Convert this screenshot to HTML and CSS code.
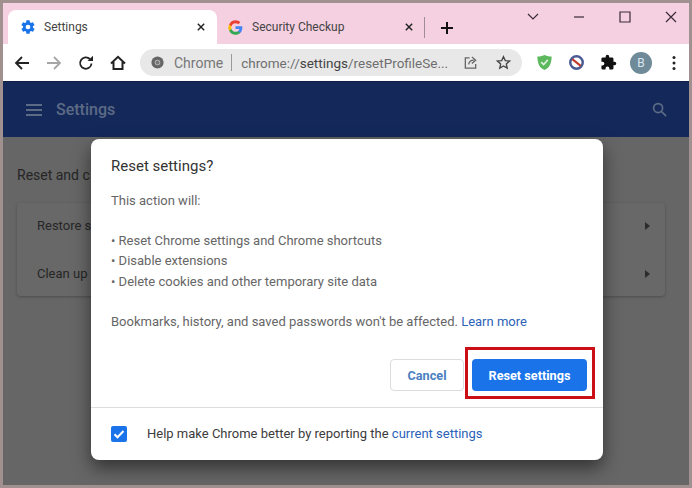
FILE: index.html
```html
<!DOCTYPE html>
<html lang="en">
<head>
<meta charset="utf-8">
<title>Settings</title>
<link rel="stylesheet" href="styles.css">
</head>
<body>
<div class="window">
  <div class="tabstrip">
    <div class="tab active">
      <svg class="favicon" viewBox="0 0 24 24"><path fill="#1a73e8" d="M19.4 13c.04-.32.07-.66.07-1s-.03-.68-.07-1l2.1-1.65c.2-.15.25-.42.12-.64l-2-3.46c-.12-.22-.38-.3-.6-.22l-2.5 1c-.52-.4-1.08-.73-1.7-.98l-.37-2.65A.5.5 0 0 0 14 2h-4a.5.5 0 0 0-.5.42l-.37 2.65c-.62.25-1.18.59-1.7.98l-2.5-1c-.22-.08-.48 0-.6.22l-2 3.46c-.13.22-.07.49.12.64L4.57 11c-.04.32-.07.66-.07 1s.03.68.07 1l-2.1 1.65c-.2.15-.25.42-.12.64l2 3.46c.12.22.38.3.6.22l2.5-1c.52.4 1.08.73 1.7.98l.37 2.65c.05.24.25.42.5.42h4c.25 0 .45-.18.5-.42l.37-2.65c.62-.25 1.18-.59 1.7-.98l2.5 1c.22.08.48 0 .6-.22l2-3.46c.13-.22.07-.49-.12-.64L19.4 13zM12 15.5a3.5 3.5 0 1 1 0-7 3.5 3.5 0 0 1 0 7z"/></svg>
      <span class="tab-title">Settings</span>
      <svg class="tab-close" viewBox="0 0 10 10"><path d="M1 1l8 8M9 1l-8 8"/></svg>
    </div>
    <div class="tab">
      <svg class="favicon" viewBox="0 0 24 24"><path fill="#4285f4" d="M23 12.3c0-.8-.1-1.600-.2-2.300H12v4.400h6.200c-.3 1.400-1.100 2.600-2.300 3.400v2.800h3.700c2.100-2 3.400-4.900 3.400-8.300z"/><path fill="#34a853" d="M12 23.500c3.100 0 5.700-1 7.600-2.800l-3.700-2.900c-1 .7-2.300 1.100-3.900 1.100-3 0-5.500-2-6.400-4.700H1.800V17c1.900 3.900 5.800 6.500 10.200 6.500z"/><path fill="#fbbc05" d="M5.600 14.200c-.2-.7-.4-1.400-.4-2.200s.1-1.500.4-2.200V7H1.800C1 8.500.5 10.200.5 12s.5 3.500 1.300 5l3.800-2.800z"/><path fill="#ea4335" d="M12 5.100c1.700 0 3.200.6 4.400 1.700l3.300-3.300C17.700 1.600 15.100.5 12 .5 7.600.5 3.700 3.100 1.800 7l3.800 2.800c.9-2.700 3.400-4.700 6.400-4.700z"/></svg>
      <span class="tab-title">Security Checkup</span>
      <svg class="tab-close" viewBox="0 0 10 10"><path d="M1 1l8 8M9 1l-8 8"/></svg>
    </div>
    <span class="tab-sep"></span>
    <svg class="new-tab" viewBox="0 0 12 12"><path d="M6 0v12M0 6h12"/></svg>
    <div class="win-controls">
      <svg viewBox="0 0 14 14"><path d="M2 4l5 5 5-5"/></svg>
      <svg viewBox="0 0 14 14"><path d="M2 7h10"/></svg>
      <svg viewBox="0 0 14 14"><path d="M2 2h10v10H2z"/></svg>
      <svg viewBox="0 0 14 14"><path d="M2 2l10 10M12 2L2 12"/></svg>
    </div>
  </div>

  <div class="toolbar">
    <svg class="nav" viewBox="0 0 16 16"><path d="M15 8H2M8 2L2 8l6 6"/></svg>
    <svg class="nav off" viewBox="0 0 16 16"><path d="M1 8h13M8 2l6 6-6 6"/></svg>
    <svg class="nav" viewBox="0 0 16 16"><path d="M13.500 8.500A5.700 5.700 0 1 1 12 4.200"/><path class="fill" d="M9.500 6H15V.8z"/></svg>
    <svg class="nav home" viewBox="0 0 16 16"><path d="M1 8.500L8 1.800l7 6.700M3.500 7v7h9V7"/></svg>
    <div class="omnibox">
      <svg class="site" viewBox="0 0 16 16"><circle cx="8" cy="8" r="7.500" fill="#666"/><circle cx="8" cy="8" r="3.400" fill="#bdbdbd"/><circle cx="8" cy="8" r="2.400" fill="#777"/></svg>
      <span class="site-name">Chrome</span>
      <span class="omni-sep"></span>
      <span class="url">chrome://<span class="url-dark">settings</span>/resetProfileSe...</span>
      <svg class="omni-icon share" viewBox="0 0 16 16"><path d="M7 3H2.500v11h11V9.500M6 10c.5-3 3-4.500 5.500-4.500M9.500 2l4 3.500-4 3.500"/></svg>
      <svg class="omni-icon star" viewBox="0 0 16 16"><path d="M8 1.800l1.900 4.200 4.500.5-3.400 3 1 4.500L8 11.700 4 14l1-4.500-3.400-3 4.500-.5z"/></svg>
    </div>
    <div class="extensions">
      <svg viewBox="0 0 18 18"><path fill="#5cb85c" d="M9 1c3 1.400 5 1.700 7.500 1.700 0 7-2 12-7.500 14.300C3.500 14.700 1.500 9.700 1.500 2.700 4 2.700 6 2.400 9 1z"/><path fill="none" stroke="#dff2df" stroke-width="1.800" d="M5.500 8.500l2.600 2.600 4.500-5"/></svg>
      <svg viewBox="0 0 18 18"><circle cx="9" cy="9" r="6.600" fill="#fff" stroke="#4a5a94" stroke-width="2.600"/><path stroke="#c0392b" stroke-width="2.200" d="M4.500 5.500l9 7"/></svg>
      <svg viewBox="0 0 24 24"><path fill="#111" d="M20.500 11H19V7a2 2 0 0 0-2-2h-4V3.500a2.500 2.500 0 0 0-5 0V5H4a2 2 0 0 0-2 2v3.800h1.500a2.700 2.700 0 0 1 0 5.400H2V20a2 2 0 0 0 2 2h3.800v-1.500a2.700 2.700 0 0 1 5.400 0V22H17a2 2 0 0 0 2-2v-4h1.500a2.500 2.500 0 0 0 0-5z"/></svg>
      <span class="avatar">B</span>
      <svg class="dots" viewBox="0 0 4 16"><circle cx="2" cy="2.500" r="1.500"/><circle cx="2" cy="8" r="1.500"/><circle cx="2" cy="13.500" r="1.500"/></svg>
    </div>
  </div>

  <div class="page">
    <header class="app-bar">
      <svg class="menu" viewBox="0 0 16 12"><path d="M0 1h16M0 6h16M0 11h16"/></svg>
      <span class="app-title">Settings</span>
      <svg class="search" viewBox="0 0 16 16"><circle cx="6.500" cy="6.500" r="4.800"/><path d="M10 10l5 5"/></svg>
    </header>
    <main class="content">
      <h2 class="section-title">Reset and c</h2>
      <div class="card">
        <div class="card-row"><span>Restore s</span><i class="arrow"></i></div>
        <div class="card-row"><span>Clean up</span><i class="arrow"></i></div>
      </div>
    </main>
  </div>

  <div class="dialog">
    <div class="dialog-body">
      <h1 class="dialog-title">Reset settings?</h1>
      <p class="intro">This action will:</p>
      <ul class="effects">
        <li>• Reset Chrome settings and Chrome shortcuts</li>
        <li>• Disable extensions</li>
        <li>• Delete cookies and other temporary site data</li>
      </ul>
      <p class="note">Bookmarks, history, and saved passwords won't be affected. <a class="link">Learn more</a></p>
      <div class="actions">
        <button class="btn cancel">Cancel</button>
        <button class="btn primary">Reset settings</button>
      </div>
    </div>
    <div class="dialog-foot">
      <span class="checkbox"><svg viewBox="0 0 16 16"><path d="M3.500 8.200l3 3 6-6.200"/></svg></span>
      <span>Help make Chrome better by reporting the <a class="link">current settings</a></span>
    </div>
    <span class="highlight"></span>
  </div>
</div>
</body>
</html>
```
FILE: styles.css
```css
* { box-sizing: border-box; }
html, body { margin: 0; height: 100%; }
body { font-family: Roboto, "Liberation Sans", sans-serif; overflow: hidden; }
svg { display: block; fill: none; }

.window {
  position: relative;
  width: 692px;
  height: 488px;
  border: 3px solid #a0908f;
  display: flex;
  flex-direction: column;
  background: #666;
}

.tabstrip {
  height: 41px;
  flex: none;
  background: #f5d0e0;
  display: flex;
  align-items: flex-end;
  padding-left: 5px;
  position: relative;
}
.tab {
  width: 209px;
  height: 34px;
  display: flex;
  align-items: center;
  padding: 0 0 0 12px;
  font-size: 12px;
  color: #444;
  border-radius: 8px 8px 0 0;
  flex: none;
}
.tab.active { background: #fff; }
.tab .favicon { width: 16px; height: 16px; flex: none; }
.tab-title { margin-left: 8px; flex: 1; }
.tab:nth-child(2) { width: 205px; padding-left: 11px; }
.tab:nth-child(2) .favicon { width: 15px; height: 15px; }
.tab:nth-child(2) .tab-title { margin-left: 9px; }
.tab-close { width: 8px; height: 8px; margin-right: 12px; stroke: #222; stroke-width: 1.800; }
.tab:nth-child(2) .tab-close { margin-right: 9px; }
.tab-sep { width: 1px; height: 21px; background: #a08c96; margin: 0 0 6px 2px; flex: none; align-self: flex-end; }
.new-tab { width: 12px; height: 12px; margin: 0 0 10px 16px; stroke: #111; stroke-width: 2; }
.win-controls {
  position: absolute;
  top: 7px;
  right: 11px;
  display: flex;
  gap: 32px;
}
.win-controls svg { width: 14px; height: 14px; stroke: #3a2a3a; stroke-width: 1.200; }

.toolbar {
  height: 37px;
  flex: none;
  background: #fff;
  display: flex;
  align-items: center;
  padding-left: 11px;
}
.nav { width: 16px; height: 16px; stroke: #222; stroke-width: 1.800; margin-right: 16px; flex: none; }
.nav.off { stroke: #a6a6a6; }
.nav.home { stroke-width: 2; margin-right: 14px; }
.nav .fill { fill: #222; stroke: none; }
.omnibox {
  width: 382px;
  height: 27px;
  flex: none;
  border-radius: 14px;
  background: #e8e8e8;
  display: flex;
  align-items: center;
  padding-left: 11px;
  font-size: 14px;
  color: #777;
}
.site { width: 13px; height: 13px; flex: none; }
.site-name { margin-left: 10px; }
.omni-sep { width: 1px; height: 17px; background: #999; margin: 0 9px 0 8px; }
.url { flex: 1; white-space: nowrap; color: #6f6f6f; font-size: 13.500px; }
.url-dark { color: #444; }
.omni-icon { width: 15px; height: 15px; flex: none; stroke-width: 1.400; }
.share { stroke: #666; margin-right: 18px; }
.star { stroke: #444; margin-right: 11px; }
.extensions {
  display: flex;
  align-items: center;
  margin-left: 14px;
}
.extensions > svg { width: 17px; height: 17px; margin-right: 15px; flex: none; }
.extensions > svg:nth-child(3) { margin-right: 13px; }
.extensions .dots { width: 4px; height: 16px; margin: 0 0 0 20px; fill: #222; }
.avatar {
  width: 22px;
  height: 22px;
  border-radius: 50%;
  background: #6f8a99;
  color: #d8e6ee;
  font-size: 12px;
  display: flex;
  align-items: center;
  justify-content: center;
  flex: none;
}

.page { flex: 1; display: flex; flex-direction: column; }
.app-bar {
  height: 56px;
  flex: none;
  background: #14285a;
  border-top: 1px solid #0e1f4a;
  display: flex;
  align-items: center;
  padding-left: 23px;
  padding-right: 22px;
}
.menu { width: 16px; height: 12px; stroke: #5c6b85; stroke-width: 1.800; flex: none; }
.app-title { margin-left: 14px; font-size: 16px; font-weight: 500; color: #5c6b85; flex: 1; }
.search { width: 15px; height: 15px; stroke: #5c6b85; stroke-width: 1.800; }

.content { flex: 1; background: #666; padding: 30px 24px 0 14px; }
.section-title { margin: 0 0 20px; font-size: 14px; font-weight: 400; line-height: 16px; color: #252525; }
.card {
  height: 93px;
  border-radius: 4px;
  box-shadow: 0 1px 3px rgba(0,0,0,.25);
  background: #686868;
}
.card-row {
  height: 45px;
  display: flex;
  align-items: center;
  justify-content: space-between;
  padding: 0 15px 0 20px;
  font-size: 13px;
  color: #262626;
}
.card-row + .card-row { height: 48px; padding-top: 3px; }
.arrow {
  border-left: 5px solid #2c2c2c;
  border-top: 4px solid transparent;
  border-bottom: 4px solid transparent;
}

.dialog {
  position: absolute;
  left: 88px;
  top: 136px;
  width: 512px;
  height: 321px;
  background: #fff;
  border-radius: 8px;
  box-shadow: 0 8px 18px rgba(0,0,0,.5);
  display: flex;
  flex-direction: column;
  font-size: 13px;
  line-height: 20px;
  color: #666;
}
.dialog-body { flex: 1; padding: 16px 16px 16px 20px; display: flex; flex-direction: column; }
.dialog-title { margin: 0; padding-top: 1px; font-size: 15px; font-weight: 400; line-height: 20px; color: #333; }
.intro { margin: 15px 0 0; }
.effects { list-style: none; margin: 20px 0 0; padding: 0; }
.effects li { height: 20px; }
.effects li:last-child { margin-top: 1px; }
.note { margin: 19.500px 0 0; }
.link { color: #2b62b8; }
.actions { margin-top: auto; display: flex; justify-content: flex-end; gap: 8px; }
.btn {
  height: 32px;
  border-radius: 4px;
  font: 700 12.700px Roboto, "Liberation Sans", sans-serif;
  padding: 0;
}
.cancel { width: 74px; background: #fff; border: 1px solid #dcdcdc; color: #4a7fc0; }
.primary { width: 115px; background: #1a73e8; border: 0; color: #fff; }
.dialog-foot {
  height: 53px;
  flex: none;
  border-top: 1px solid #ddd;
  display: flex;
  align-items: center;
  padding-left: 20px;
  gap: 20px;
  color: #3c3c3c;
  font-size: 13px;
}
.checkbox { width: 16px; height: 16px; border-radius: 2px; background: #1a73e8; flex: none; }
.checkbox svg { stroke: #fff; stroke-width: 2; }
.highlight {
  position: absolute;
  left: 374px;
  top: 208px;
  width: 130px;
  height: 52px;
  border: 3px solid #cc0e16;
}
```
